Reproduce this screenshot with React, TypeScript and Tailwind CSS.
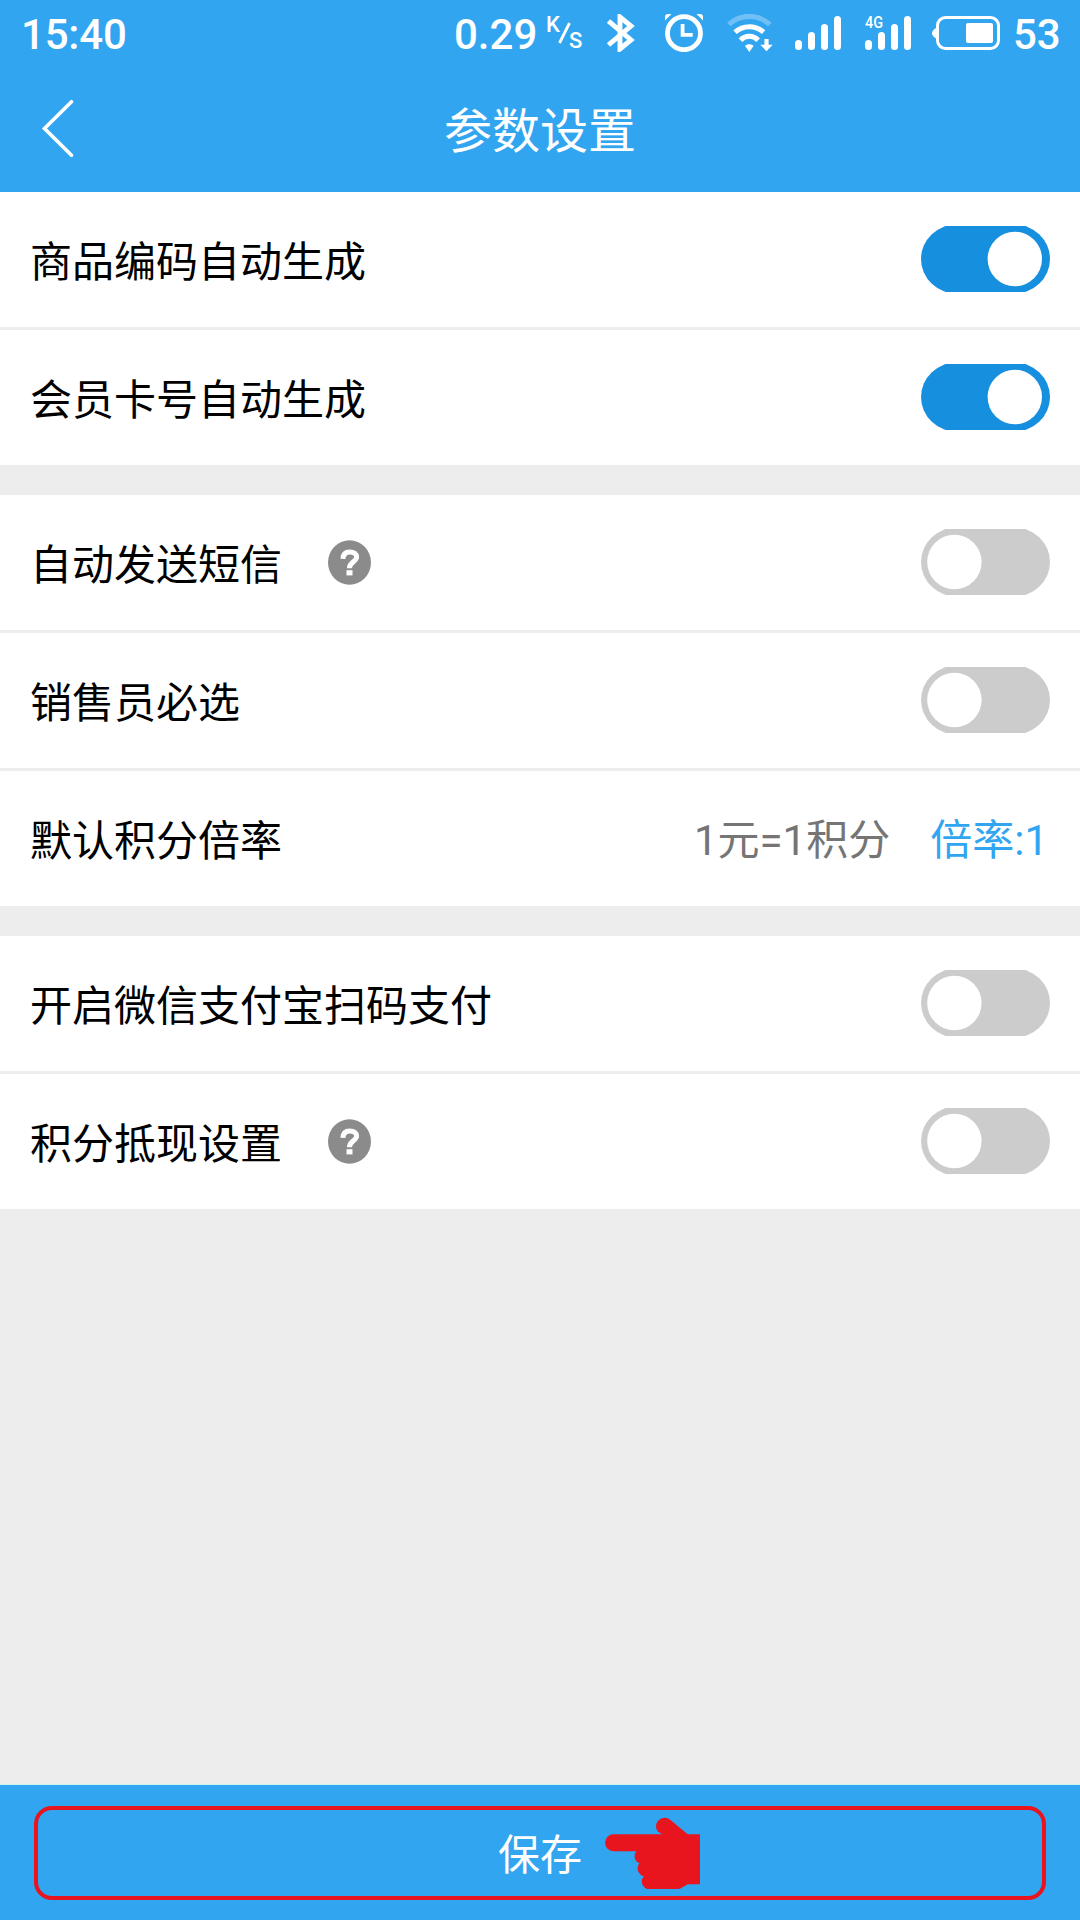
import { useState } from 'react';

type ToggleProps = {
    checked: boolean;
    onChange: () => void;
};

// --- Toggle switch ---
function Toggle({ checked, onChange }: ToggleProps) {
    return (
        <button type="button" role="switch" aria-checked={checked} onClick={onChange} className="mb-px block h-[66px] w-[129px] shrink-0">
            <svg width="129" height="66" viewBox="0 0 129 66">
                <rect x="0" y="-2" width="129" height="70" rx="37" ry="35" fill={checked ? '#168fdf' : '#cccccc'} />
                <circle cx={checked ? 93.8 : 33.4} cy="33" r="27.2" fill="#fff" />
            </svg>
        </button>
    );
}

function HelpIcon() {
    return (
        <svg width="44" height="45" viewBox="0 0 44 45" className="ml-[46px] mb-px">
            <ellipse cx="21.5" cy="22.5" rx="21.5" ry="22.3" fill="#8b8b8b" />
            <path d="M14.9 18.8C15.2 13.4 18 11.9 21.8 11.9C25.9 11.9 28.6 13.7 28.6 17.1C28.6 21.8 21.4 22 21.4 28.3" fill="none" stroke="#fff" strokeWidth="5" />
            <rect x="18.5" y="30.2" width="6" height="5.2" fill="#fff" />
        </svg>
    );
}

function SignalIcon() {
    return (
        <svg width="46" height="34" viewBox="0 0 46 34" fill="#fff">
            <rect x="0" y="24" width="7" height="10" rx="3.5" />
            <rect x="13" y="16" width="7" height="18" rx="3.5" />
            <rect x="26" y="8" width="7" height="26" rx="3.5" />
            <rect x="39" y="0" width="7" height="34" rx="3.5" />
        </svg>
    );
}

// --- Phone status bar ---
function StatusBar() {
    return (
        <div className="flex h-[66px] items-center pl-[21px] text-[42px] leading-[66px] font-medium">
            <span className="w-[433px] pt-1 tracking-[-0.2px]">15:40</span>
            <span className="w-[93px] pt-1">0.29</span>
            <div className="flex h-[34px] w-[60px] text-[22px] leading-none">
                <span className="-mt-[2px] -ml-[1px]">K</span>
                <svg width="14" height="24" viewBox="0 0 14 24" className="mt-[5px] -ml-[2px]">
                    <path d="M1.5 22L11.5 2" stroke="#fff" strokeWidth="2.8" />
                </svg>
                <span className="mt-[14px] -ml-[3px]">S</span>
            </div>
            {/* bluetooth */}
            <svg width="28" height="38" viewBox="0 0 28 38" fill="none" stroke="#fff" strokeWidth="4.9">
                <path d="M1.5 7L24 26L13 35V3L24 12L1.5 31" />
            </svg>
            {/* alarm */}
            <svg width="38" height="38" viewBox="0 0 38 38" className="ml-[30px]" fill="none" stroke="#fff">
                <circle cx="19" cy="19.2" r="16.5" strokeWidth="4.8" />
                <path d="M17.6 10V20.8H27.7" strokeWidth="3.8" />
                <path d="M0 6.5V3Q0 0 3 0H6.5ZM38 6.5V3Q38 0 35 0H31.5Z" fill="#fff" stroke="none" />
            </svg>
            {/* wifi */}
            <svg width="48" height="38" viewBox="0 0 48 38" className="ml-[24px]" fill="none" stroke="#fff" strokeWidth="5">
                <path d="M1.8 10.5A30 30 0 0 1 42.8 10.5" opacity="0.3" />
                <path d="M8 18.2A21.4 21.4 0 0 1 36.6 18.2" />
                <path d="M13.5 26.2A12 12 0 0 1 31.1 26.2" />
                <path d="M18.8 32Q22.3 29.5 25.8 32L22.3 37Z" fill="#fff" strokeWidth="1.2" />
                <path d="M39.5 25V32" strokeWidth="4.2" />
                <path d="M33.3 30.8H45.7L39.5 37.2Z" fill="#fff" stroke="none" />
            </svg>
            <div className="ml-[20px]">
                <SignalIcon />
            </div>
            <div className="relative ml-[24px]">
                <SignalIcon />
                <span className="absolute -top-[3px] left-0 origin-left scale-x-[.85] text-[17px] leading-[18px]">4G</span>
            </div>
            {/* battery */}
            <svg width="68" height="34" viewBox="0 0 68 34" className="ml-[21px]">
                <rect x="5.5" y="1.5" width="61" height="31" rx="8" fill="none" stroke="#fff" strokeWidth="3" />
                <path d="M5 11.5Q0 14 0 17.3Q0 20.5 5 23Z" fill="#fff" />
                <rect x="34" y="7" width="27" height="20" rx="2" fill="#fff" />
            </svg>
            <span className="ml-[13px] pt-1">53</span>
        </div>
    );
}

type Row = {
    key: string;
    label: string;
    help?: boolean;
};

const groups: Row[][] = [
    [
        { key: 'goodsCode', label: '商品编码自动生成' },
        { key: 'memberCard', label: '会员卡号自动生成' },
    ],
    [
        { key: 'autoSms', label: '自动发送短信', help: true },
        { key: 'salesRequired', label: '销售员必选' },
        { key: 'rate', label: '默认积分倍率' },
    ],
    [
        { key: 'scanPay', label: '开启微信支付宝扫码支付' },
        { key: 'pointsCash', label: '积分抵现设置', help: true },
    ],
];

export default function App() {
    const [settings, setSettings] = useState<Record<string, boolean>>({
        goodsCode: true,
        memberCard: true,
    });

    const toggle = (key: string) => setSettings((prev) => ({ ...prev, [key]: !prev[key] }));

    return (
        <div className="flex h-[1920px] w-[1080px] flex-col overflow-hidden bg-[#ededed] font-[Roboto,'Noto_Sans_CJK_SC',sans-serif] text-[42px] text-black">
            <header className="h-[192px] bg-[#32a5f1] text-white">
                <StatusBar />
                <div className="grid h-[126px] grid-cols-[1fr_auto_1fr] items-center">
                    <svg width="34" height="60" viewBox="0 0 34 60" className="mb-[4px] ml-[41px]">
                        <path d="M30.5 4.7L3.5 31.5L30.5 58.3" fill="none" stroke="#fff" strokeWidth="3.6" strokeLinecap="round" />
                    </svg>
                    <h1 className="pt-[5px] text-[48px] leading-[60px]">参数设置</h1>
                </div>
            </header>

            <main className="flex flex-1 flex-col gap-[30px]">
                {groups.map((rows, i) => (
                    <section key={i} className="flex flex-col gap-[3px]">
                        {rows.map((row) => (
                            <div key={row.key} className="flex h-[135px] items-center bg-white px-[30px]">
                                <span className="pt-[6px] leading-[60px]">{row.label}</span>
                                {row.help && <HelpIcon />}
                                <div className="ml-auto">
                                    {row.key === 'rate' ? (
                                        <div className="flex gap-[40px] pt-[5px] pr-[2px] leading-[60px]">
                                            <span className="text-[#757575]">1元=1积分</span>
                                            <span className="text-[#32a5f1]">倍率:1</span>
                                        </div>
                                    ) : (
                                        <Toggle checked={!!settings[row.key]} onChange={() => toggle(row.key)} />
                                    )}
                                </div>
                            </div>
                        ))}
                    </section>
                ))}
            </main>

            <footer className="h-[136px] border-t border-[#c9f4f0] bg-[#32a5f1] px-[34px] pt-[21px] text-white">
                <button type="button" className="relative block h-[94px] w-[1012px] rounded-[18px] border-4 border-[#e8141e] pt-[6px] leading-[80px]">
                    保存
                    {/* pointing hand */}
                    <svg width="96" height="72" viewBox="0 0 96 72" className="absolute top-[7px] left-[567px]" fill="#e8141e">
                        <path d="M8.5 17.3H57L52.8 14.5A8.6 8.6 0 0 1 65.5 3L82.7 17.3H95V67.3H82.7L77 70.5Q75 72 72.7 72H46A7.6 7.6 0 0 1 39 59.3A8 8 0 0 1 34.5 46.3A7.5 7.5 0 0 1 31.5 34.2H8.5A8.45 8.45 0 0 1 8.5 17.3Z" />
                    </svg>
                </button>
            </footer>
        </div>
    );
}
